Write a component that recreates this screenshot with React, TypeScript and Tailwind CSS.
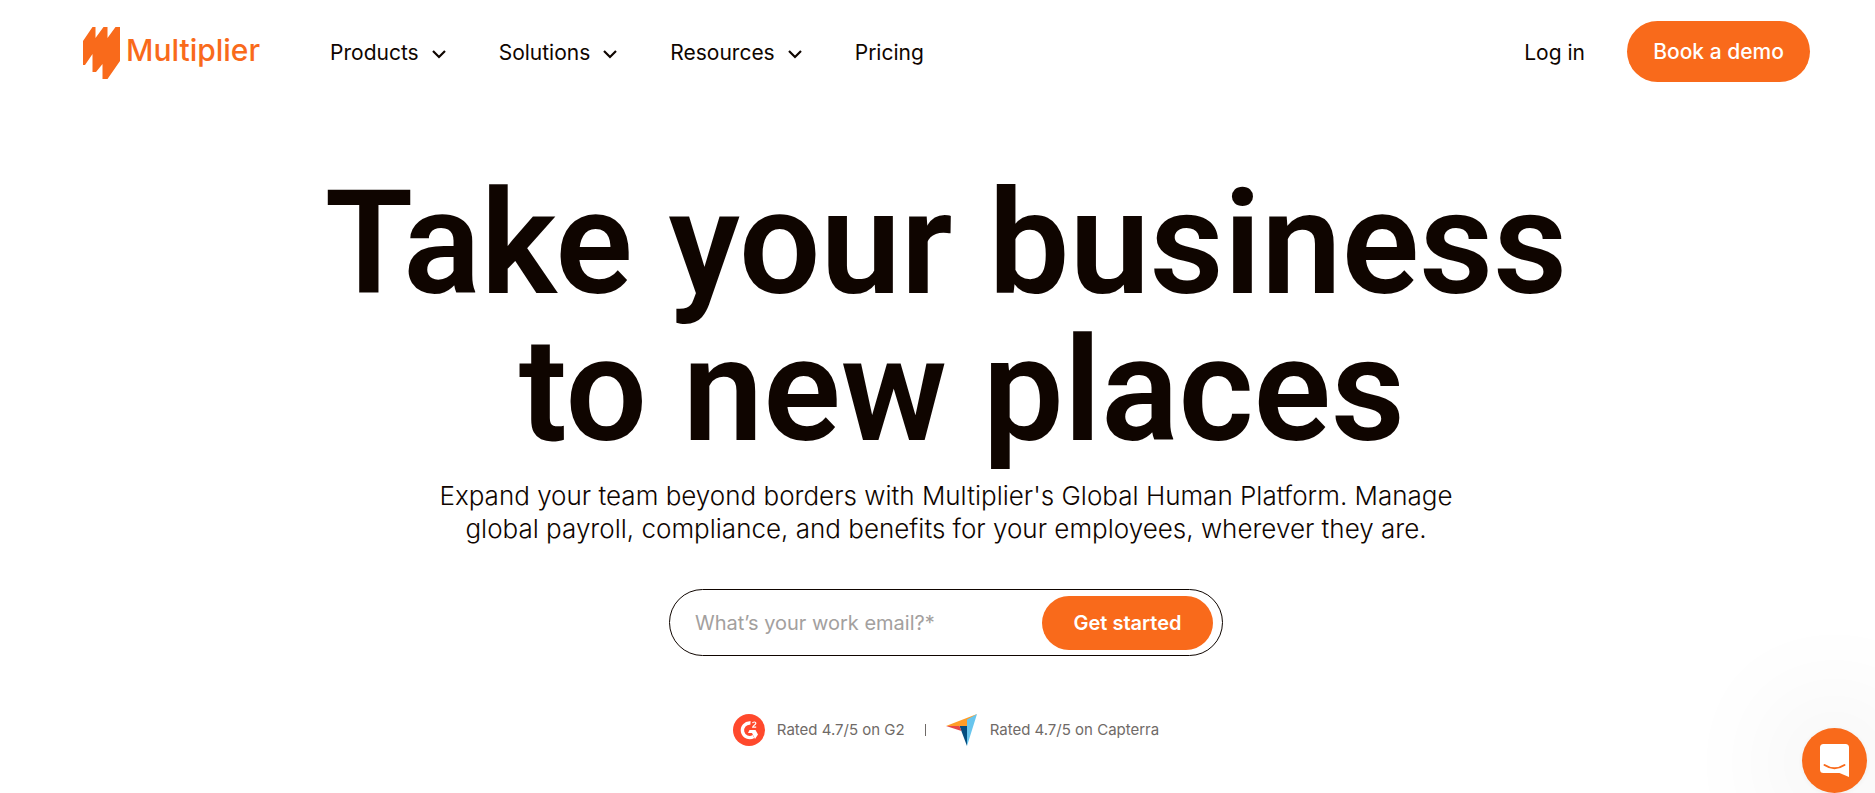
import React, { useState } from "react";

const navItems = [
  { label: "Products", hasMenu: true },
  { label: "Solutions", hasMenu: true },
  { label: "Resources", hasMenu: true },
  { label: "Pricing", hasMenu: false },
];

const Logo = () => (
  <a href="#" className="flex items-center gap-1.5 text-[#f96a1b]">
    <svg width="37" height="52" viewBox="0 0 37 52" fill="currentColor" className="mt-0.5">
      <path d="M0 14 9.5 0H12.5V11L20.5 0H24.5V11L32.5 0H37V34L24.5 52H19.5V37L13 45H9.5V27L2 38H0Z" />
    </svg>
    <span className="pb-1 text-3xl font-medium">Multiplier</span>
  </a>
);

const Chevron = () => (
  <svg width="16" height="16" viewBox="0 0 16 16" fill="none" className="mt-0.5">
    <path d="M2 5 8 11 14 5" stroke="currentColor" strokeWidth="2.2" />
  </svg>
);

const Header = () => (
  <header className="flex items-center py-[21px] pr-[65px] pl-[83px]">
    <Logo />
    <nav className="ml-[70px] flex items-center gap-[52px] pt-0.5 text-[21px]">
      {navItems.map((item) =>
        item.hasMenu ? (
          <button key={item.label} type="button" className="flex items-center gap-3">
            {item.label}
            <Chevron />
          </button>
        ) : (
          <a key={item.label} href="#">
            {item.label}
          </a>
        )
      )}
    </nav>
    <div className="ml-auto flex items-center gap-[42px]">
      <a href="#" className="pt-0.5 text-[21px]">
        Log in
      </a>
      <button
        type="button"
        className="h-[61px] w-[183px] rounded-full bg-[#f96a1b] text-[21px] font-medium text-white"
      >
        Book a demo
      </button>
    </div>
  </header>
);

const G2Icon = () => (
  <svg width="32" height="32" viewBox="0 0 32 32">
    <circle cx="16" cy="16" r="16" fill="#ff492c" />
    <path
      d="M17.5 9A7.3 7.3 0 1 0 20.5 22.5"
      fill="none"
      stroke="#fff"
      strokeWidth="3.4"
    />
    <path d="M16.5 16H22.500L25 20.5 22 25 19 19H15Z" fill="#fff" />
    <path
      d="M19.5 9.2C20 7.5 23 7.6 22.8 9.4 22.7 10.8 20 11.5 19.7 13.2H23.2"
      fill="none"
      stroke="#fff"
      strokeWidth="1.2"
    />
  </svg>
);

const CapterraIcon = () => (
  <svg width="32" height="32" viewBox="0 0 32 32">
    <path d="M0 12H21V8L31 0Z" fill="#ff9d28" />
    <path d="M21 5.5 31 0 21 32Z" fill="#68c5ed" />
    <path d="M13.5 12H21V32Z" fill="#044d80" />
    <path d="M0 12H13.5L15.5 17Z" fill="#e54747" />
  </svg>
);

const Hero = () => {
  const [email, setEmail] = useState("");

  return (
    <main className="flex flex-col items-center pt-[67px] pb-12 pl-[17px] text-center">
      <h1 className="font-['Roboto',sans-serif] text-[144px] leading-[147px] font-semibold">
        <span className="block">Take your business</span>
        <span className="block pl-8">to new places</span>
      </h1>
      <p className="mt-[15px] text-[26px] leading-[33px] font-light">
        Expand your team beyond borders with Multiplier's Global Human Platform. Manage
        <br />
        global payroll, compliance, and benefits for your employees, wherever they are.
      </p>
      <form
        onSubmit={(e) => e.preventDefault()}
        className="mt-11 flex h-[67px] w-full max-w-[554px] items-center rounded-full border border-[#0f0500] pr-[9px] pl-[25px]"
      >
        <input
          type="email"
          aria-label="Work email"
          placeholder="What’s your work email?*"
          value={email}
          onChange={(e) => setEmail(e.target.value)}
          className="min-w-0 flex-1 text-xl outline-none placeholder:text-[#a3a09e]"
        />
        <button
          type="submit"
          className="h-[54px] w-[171px] rounded-full bg-[#f96a1b] text-xl font-semibold text-white"
        >
          Get started
        </button>
      </form>
      <div className="mt-[58px] flex items-center text-[15px] text-[#6f6a67]">
        <G2Icon />
        <span className="ml-3">Rated 4.7/5 on G2</span>
        <span className="mx-5 h-3 w-px bg-[#6f6a67]" />
        <CapterraIcon />
        <span className="ml-3">Rated 4.7/5 on Capterra</span>
      </div>
    </main>
  );
};

const ChatButton = () => (
  <div className="fixed right-2 bottom-0">
    <button
      type="button"
      aria-label="Open chat"
      className="flex size-[65px] items-center justify-center rounded-full bg-[#f96a1b] shadow-[0_1px_6px_rgba(0,0,0,0.06),0_2px_120px_20px_rgba(0,0,0,0.08)]"
    >
      <svg width="29" height="33" viewBox="0 0 29 33">
        <path d="M3.5 0H25.5A3.5 3.5 0 0 1 29 3.5V33L19.5 29H3.5A3.5 3.5 0 0 1 0 25.5V3.5A3.5 3.5 0 0 1 3.5 0Z" fill="#fff" />
        <path d="M4.5 21Q14.5 27.5 24.5 21" fill="none" stroke="#f96a1b" strokeWidth="2" strokeLinecap="round" />
      </svg>
    </button>
  </div>
);

export default function App() {
  return (
    <div className="overflow-hidden bg-white font-['Inter',sans-serif] text-[#0f0500]">
      <Header />
      <Hero />
      <ChatButton />
    </div>
  );
}
